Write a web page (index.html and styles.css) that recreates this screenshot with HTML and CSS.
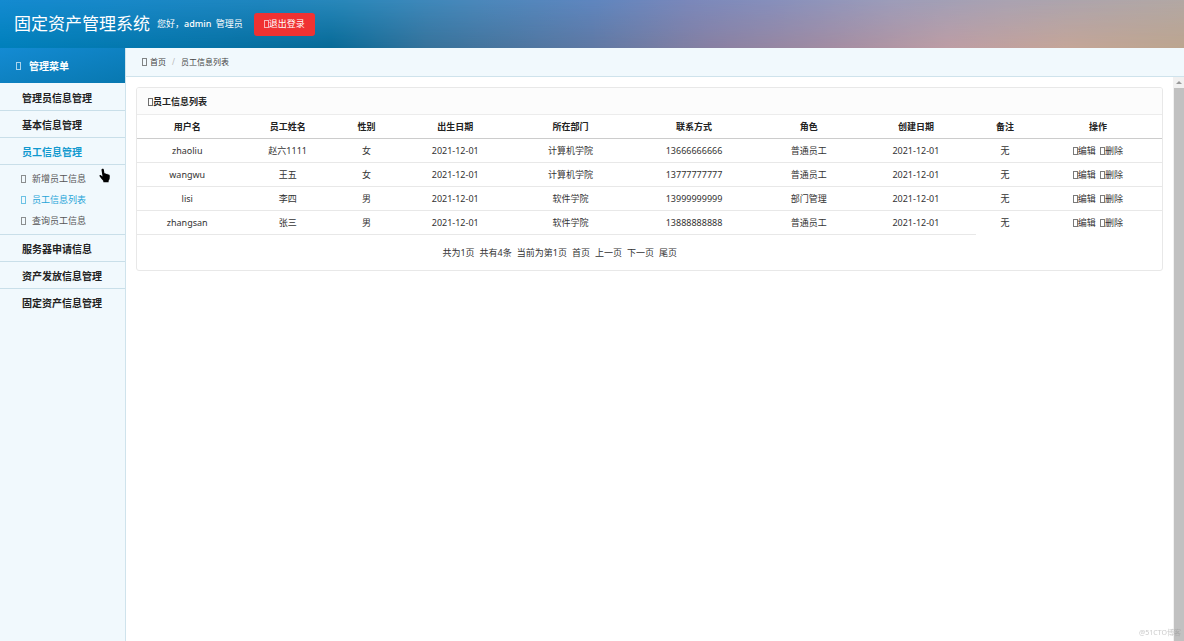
FILE: index.html
```html
<!DOCTYPE html>
<html lang="zh-CN">
<head>
<meta charset="utf-8">
<title>固定资产管理系统</title>
<link rel="stylesheet" href="styles.css">
</head>
<body>
<header class="topbar">
  <h1 class="brand">固定资产管理系统</h1>
  <p class="greeting">您好，<strong>admin</strong> <span>管理员</span></p>
  <button class="logout" type="button"><i class="glyph"></i>退出登录</button>
</header>
<div class="shell">
  <nav class="sidebar">
    <h2 class="menu-title"><i class="glyph"></i>管理菜单</h2>
    <ul class="menu">
      <li><a class="menu-link" href="#">管理员信息管理</a></li>
      <li><a class="menu-link" href="#">基本信息管理</a></li>
      <li><a class="menu-link active" href="#">员工信息管理</a>
        <ul class="submenu">
          <li><a class="sub-link" href="#"><i class="glyph"></i>新增员工信息</a></li>
          <li><a class="sub-link active" href="#"><i class="glyph"></i>员工信息列表</a></li>
          <li><a class="sub-link" href="#"><i class="glyph"></i>查询员工信息</a></li>
        </ul>
      </li>
      <li><a class="menu-link" href="#">服务器申请信息</a></li>
      <li><a class="menu-link" href="#">资产发放信息管理</a></li>
      <li><a class="menu-link" href="#">固定资产信息管理</a></li>
    </ul>
    <svg class="pointer" viewBox="0 0 12 15"><path d="M3.2.8C4.2.5 4.800 1 4.900 2l.5 3.300 1-.1.6.7 1.200-.2.6.8 1.100 0c.7.3.9 1 .9 1.800l-.2 2.700-1 1.700v1.500H4.400l-.2-1.400-2-2.300L.6 8.200C.2 7.300 1.100 6.700 1.900 7.300l1.600 1.200L2.500 2C2.400 1.400 2.600 1 3.200.8z"/></svg>
  </nav>
  <div class="content">
    <nav class="crumbs">
      <a href="#"><i class="glyph"></i>首页</a><span class="slash">/</span><span>员工信息列表</span>
    </nav>
    <div class="frame">
      <main class="page">
        <section class="panel">
          <h3 class="panel-title"><i class="glyph"></i>员工信息列表</h3>
          <table class="grid">
            <colgroup><col class="c-user"><col class="c-name"><col class="c-sex"><col class="c-birth"><col class="c-dept"><col class="c-phone"><col class="c-role"><col class="c-created"><col class="c-note"><col class="c-ops"></colgroup>
            <thead>
              <tr><th>用户名</th><th>员工姓名</th><th>性别</th><th>出生日期</th><th>所在部门</th><th>联系方式</th><th>角色</th><th>创建日期</th><th>备注</th><th>操作</th></tr>
            </thead>
            <tbody>
              <tr><td>zhaoliu</td><td>赵六1111</td><td>女</td><td>2021-12-01</td><td>计算机学院</td><td>13666666666</td><td>普通员工</td><td>2021-12-01</td><td>无</td><td><a href="#"><i class="glyph"></i>编辑</a> <a href="#"><i class="glyph"></i>删除</a></td></tr>
              <tr><td>wangwu</td><td>王五</td><td>女</td><td>2021-12-01</td><td>计算机学院</td><td>13777777777</td><td>普通员工</td><td>2021-12-01</td><td>无</td><td><a href="#"><i class="glyph"></i>编辑</a> <a href="#"><i class="glyph"></i>删除</a></td></tr>
              <tr><td>lisi</td><td>李四</td><td>男</td><td>2021-12-01</td><td>软件学院</td><td>13999999999</td><td>部门管理</td><td>2021-12-01</td><td>无</td><td><a href="#"><i class="glyph"></i>编辑</a> <a href="#"><i class="glyph"></i>删除</a></td></tr>
              <tr><td>zhangsan</td><td>张三</td><td>男</td><td>2021-12-01</td><td>软件学院</td><td>13888888888</td><td>普通员工</td><td>2021-12-01</td><td>无</td><td><a href="#"><i class="glyph"></i>编辑</a> <a href="#"><i class="glyph"></i>删除</a></td></tr>
            </tbody>
            <tfoot>
              <tr><td colspan="8"><div class="pager"><span>共为1页</span><span>共有4条</span><span>当前为第1页</span><a href="#">首页</a><a href="#">上一页</a><a href="#">下一页</a><a href="#">尾页</a></div></td></tr>
            </tfoot>
          </table>
        </section>
      </main>
      <div class="scrollbar"><span class="scroll-up"></span><span class="thumb"></span></div>
    </div>
  </div>
</div>
<span class="watermark">@51CTO博客</span>
</body>
</html>
```
FILE: styles.css
```css
* { box-sizing: border-box; }
body {
  margin: 0;
  min-height: 100vh;
  display: flex;
  flex-direction: column;
  background: #fff;
  color: #333;
  font: 9px/14px "Noto Sans", "Noto Sans CJK SC", sans-serif;
}
h1, h2, h3, p, ul { margin: 0; padding: 0; }
ul { list-style: none; }
a { color: inherit; text-decoration: none; }

/* narrow outlined box used for every icon slot */
.glyph {
  display: inline-block;
  width: 5px;
  height: 8px;
  border: 1px solid currentColor;
  opacity: .65;
  vertical-align: -1px;
}

.topbar {
  position: relative;
  isolation: isolate;
  display: flex;
  align-items: center;
  height: 48px;
  padding: 0 14px;
  color: #fff;
  background: linear-gradient(90deg, #148bd1 0%, #1f86bf 22%, #2a88ba 29%, #4a88bb 40%, #5f86bf 50%, #7a88bb 58%, #868fbc 65%, #9c9cba 75%, #aaa3b2 85%, #b3a8a4 100%);
}
/* lower tones fade in towards the bottom edge */
.topbar::before {
  content: "";
  position: absolute;
  inset: 0;
  z-index: -1;
  background: linear-gradient(90deg, #0080bb 0%, #0672a5 18%, #076a97 28%, #36729a 36%, #5f78a3 50%, #8880a2 60%, #a28ca2 70%, #bd9da4 80%, #c4a598 90%, #bca58f 100%);
  mask-image: linear-gradient(to bottom, transparent, #000);
}
.brand { font-size: 17px; line-height: 24px; font-weight: 400; }
.greeting { margin-left: 7px; }
.greeting strong { font-weight: 500; }
.greeting span { margin-left: 2px; }
.logout {
  display: flex;
  align-items: center;
  justify-content: center;
  gap: 0;
  width: 61px;
  height: 23px;
  margin-left: 11px;
  padding: 0;
  border: 0;
  border-radius: 3px;
  background: #f03232;
  color: #fff;
  font: inherit;
}

.shell { display: flex; flex: 1; }
.sidebar {
  position: relative;
  flex: 0 0 126px;
  background: #f1f9fd;
  border-right: 1px solid #cfe3ec;
}
.menu-title {
  display: flex;
  align-items: center;
  gap: 8px;
  height: 35px;
  padding-left: 16px;
  color: #fff;
  font-size: 10px;
  background: linear-gradient(165deg, #148bd3, #0878b0);
}
.menu { padding-top: 1px; }
.menu > li + li { border-top: 1px solid #c9dfe9; }
.menu-link {
  display: block;
  padding: 7px 22px 5px;
  color: #222;
  font-size: 10px;
  font-weight: 700;
}
.menu-link.active { color: #1299cf; }
.submenu { padding: 3px 0; border-top: 1px solid #c9dfe9; }
.sub-link {
  display: flex;
  align-items: center;
  gap: 6px;
  height: 21px;
  padding-left: 21px;
  color: #555;
}
.sub-link.active { color: #25a4d8; }
.pointer {
  position: absolute;
  left: 99px;
  top: 120px;
  width: 12px;
  height: 15px;
  fill: #000;
}

.content { flex: 1; min-width: 0; display: flex; flex-direction: column; }
.crumbs {
  display: flex;
  align-items: center;
  height: 29px;
  padding-left: 16px;
  border-bottom: 1px solid #cfe3ec;
  background: #f1f9fd;
  color: #444;
  font-size: 8px;
}
.crumbs .glyph { margin-right: 3px; }
.slash { margin: 0 6px; color: #bbb; }
.frame { flex: 1; display: flex; }
.page { flex: 1; min-width: 0; padding: 10px; }
.panel { border: 1px solid #e8e8e8; border-radius: 3px; overflow: hidden; }
.panel-title {
  height: 27px;
  padding: 7px 11px 5px;
  border-bottom: 1px solid #ececec;
  background: #fcfcfc;
  color: #222;
  font-size: 9px;
}
.grid { width: 100%; table-layout: fixed; border-collapse: separate; border-spacing: 0; }
.grid th, .grid td { padding: 5px 0 4px; text-align: center; }
.grid th { border-bottom: 1px solid #ccc; color: #222; }
.grid tbody tr + tr td, .grid tfoot td { border-top: 1px solid #e8e8e8; }
.grid tbody tr:first-child td { padding-top: 5px; }
.grid td a + a { margin-left: 2px; }
.grid tfoot td { padding: 11px 0 10px 6px; }
.c-user, .c-name { width: 9.8%; }
.c-sex, .c-note { width: 5.6%; }
.c-birth { width: 11.7%; }
.c-dept { width: 10.8%; }
.c-phone { width: 13.3%; }
.c-role { width: 9.1%; }
.c-created { width: 11.8%; }
.pager { display: flex; justify-content: center; gap: 5px; }
.grid .pager a { margin-left: 0; }

.scrollbar { flex: 0 0 11px; display: flex; flex-direction: column; background: #f1f1f1; }
.scroll-up { height: 11px; display: flex; align-items: center; justify-content: center; }
.scroll-up::before {
  content: "";
  border: 3px solid transparent;
  border-top: 0;
  border-bottom-color: #999;
}
.thumb { flex: 1; margin-left: 1px; background: #c1c1c1; }
.watermark {
  position: fixed;
  right: 3px;
  bottom: 1px;
  color: rgba(150, 150, 150, .5);
  font-size: 7px;
}
```
